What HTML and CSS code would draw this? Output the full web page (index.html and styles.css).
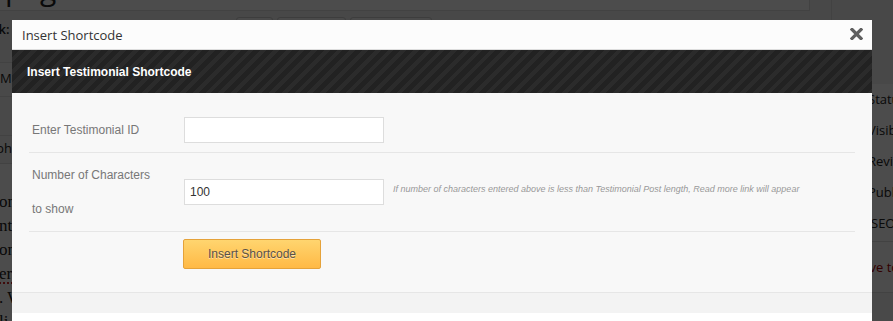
FILE: index.html
```html
<!DOCTYPE html>
<html lang="en">
<head>
    <meta charset="UTF-8">
    <meta name="viewport" content="width=device-width, initial-scale=1.0">
    <title>Insert Shortcode</title>
    <link rel="stylesheet" href="styles.css">
</head>
<body>
    <div class="wp-page">
        <div class="wp-main">
            <div class="title-box">page</div>
            <div class="permalink">
                <span class="permalink-label">Permalink:</span>
                <span class="permalink-url">http://example.com/testimonials/</span>
                <span class="small-btn btn-edit">Edit</span>
                <span class="small-btn btn-view">View Page</span>
                <span class="small-btn btn-short">Get Shortlink</span>
            </div>
            <div class="editor">
                <div class="editor-row row-media">Media</div>
                <div class="editor-row row-tools">B I</div>
                <div class="editor-row row-format">ph</div>
                <div class="editor-content">
                    <p>on the other side of the page</p>
                    <p>nt of our clients and partners</p>
                    <p>on every project we deliver</p>
                    <p class="misspelled">er customers say about us</p>
                    <p>. What they think</p>
                    <p>li</p>
                </div>
            </div>
        </div>
        <aside class="wp-side">
            <div class="side-box">
                <div class="side-item">Status: Published</div>
                <div class="side-item">Visibility: Public</div>
                <div class="side-item">Revisions: 3</div>
                <div class="side-item">Published on</div>
                <div class="side-item side-seo">SEO: Good</div>
                <div class="side-actions"><span class="trash">Move to Trash</span></div>
                <div class="side-footer"></div>
            </div>
        </aside>
    </div>

    <div class="overlay"></div>

    <div class="modal">
        <div class="modal-title">
            <span>Insert Shortcode</span>
            <svg class="modal-close" width="13" height="12" viewBox="0 0 13 12">
                <path d="M2 1.5 L11 10.5 M11 1.5 L2 10.5" stroke="#5f5f5f" stroke-width="3.2" stroke-linecap="square"/>
            </svg>
        </div>
        <div class="modal-header">Insert Testimonial Shortcode</div>
        <div class="modal-body">
            <div class="form-row">
                <label class="form-label" for="testimonial-id">Enter Testimonial ID</label>
                <div class="form-field">
                    <input type="text" id="testimonial-id">
                </div>
            </div>
            <div class="form-row">
                <label class="form-label" for="char-count">Number of Characters<br>to show</label>
                <div class="form-field">
                    <input type="text" id="char-count" value="100">
                    <span class="help">If number of characters entered above is less than Testimonial Post length, Read more link will appear</span>
                </div>
            </div>
            <div class="form-row form-actions">
                <div></div>
                <div class="form-field">
                    <button type="button" class="insert-btn">Insert Shortcode</button>
                </div>
            </div>
        </div>
        <div class="modal-footer"></div>
    </div>
</body>
</html>
```

FILE: styles.css
```css
body {
    margin: 0;
    padding: 0;
    background: #f1f1f1;
    color: #222;
    font-family: "Open Sans", Arial, sans-serif;
    font-size: 13px;
    overflow: hidden;
    height: 321px;
}

/* page behind the dialog */
.wp-page {
    display: flex;
    height: 321px;
    overflow: hidden;
}

.wp-main {
    width: 867px;
    margin-left: -58px;
    flex-shrink: 0;
}

.title-box {
    margin-top: -29px;
    height: 38px;
    width: 804px;
    border: 1px solid #ddd;
    background: #fff;
    font-size: 30px;
    line-height: 34px;
    padding-left: 62px;
}

.permalink {
    display: flex;
    align-items: center;
    height: 24px;
    margin-top: 6px;
}

.permalink-label {
    font-weight: 600;
    margin-right: 8px;
}

.permalink-url {
    width: 218px;
    color: #666;
    overflow: hidden;
    white-space: nowrap;
}

.small-btn {
    height: 22px;
    line-height: 22px;
    border: 1px solid #ccc;
    border-radius: 3px;
    background: #f7f7f7;
    font-size: 11px;
    padding: 0 4px;
    margin-right: 4px;
    overflow: hidden;
    white-space: nowrap;
}

.btn-edit { width: 27px; }
.btn-view { width: 59px; }
.btn-short { width: 72px; }

.editor {
    margin-top: 21px;
    border-top: 1px solid #ddd;
    background: #fff;
}

.editor-row {
    border-bottom: 1px solid #ddd;
    background: #f5f5f5;
    padding-left: 58px;
}

.row-media {
    height: 33px;
    line-height: 30px;
}

.row-tools {
    height: 38px;
    line-height: 38px;
    color: #f5f5f5;
}

.row-format {
    height: 27px;
    line-height: 24px;
    padding-left: 54px;
}

.editor-content {
    padding: 26px 0 0 57px;
    font-family: "Liberation Serif", "DejaVu Serif", serif;
    font-size: 17px;
    line-height: 24px;
}

.editor-content p {
    margin: 0;
    white-space: nowrap;
}

.misspelled {
    text-decoration: underline dotted #c00;
    text-underline-offset: 4px;
}

.wp-side {
    flex: 1;
    border-left: 1px solid #ddd;
    margin-left: 22px;
}

.side-box {
    margin-top: 84px;
    background: #fff;
}

.side-item {
    height: 31px;
    line-height: 31px;
    padding-left: 36px;
    white-space: nowrap;
}

.side-seo {
    padding-left: 39px;
    height: 33px;
    border-bottom: 1px solid #ddd;
}

.side-actions {
    height: 50px;
    line-height: 50px;
    padding-left: 18px;
    white-space: nowrap;
}

.trash {
    color: #a00;
}

.side-footer {
    height: 40px;
    background: #f5f5f5;
    border-top: 1px solid #ddd;
}

.overlay {
    position: fixed;
    inset: 0;
    background: rgba(0, 0, 0, 0.7);
}

/* dialog */
.modal {
    position: absolute;
    left: 12px;
    top: 20px;
    width: 860px;
    height: 301px;
    background: #fff;
}

.modal-title {
    display: flex;
    align-items: center;
    justify-content: space-between;
    height: 29px;
    padding: 0 9px 0 10px;
    background: #fcfcfc;
    border-bottom: 1px solid #ddd;
    color: #333;
    font-family: "Open Sans", Arial, sans-serif;
    font-size: 13px;
}

.modal-close {
    display: block;
    margin-top: -1px;
}

.modal-header {
    height: 43px;
    line-height: 44px;
    padding-left: 15px;
    background: repeating-linear-gradient(135deg, #222 0, #222 5px, #2b2b2b 5px, #2b2b2b 9px);
    color: #fff;
    font-family: "Liberation Sans", Arial, sans-serif;
    font-size: 12px;
    font-weight: bold;
}

.modal-body {
    background: #f8f8f8;
    padding: 15px 17px 0;
    height: 184px;
    font-family: "Liberation Sans", Arial, sans-serif;
    font-size: 12px;
}

.form-row {
    display: grid;
    grid-template-columns: 152px 1fr;
    align-items: center;
    padding: 5px 3px;
    border-bottom: 1px solid #e6e6e6;
}

.form-label {
    color: #777;
    line-height: 34px;
}

.form-field {
    display: flex;
    align-items: center;
}

.form-field input {
    width: 200px;
    height: 26px;
    box-sizing: border-box;
    border: 1px solid #ddd;
    background: #fff;
    padding: 0 5px;
    font-family: "Liberation Sans", Arial, sans-serif;
    font-size: 12px;
    color: #333;
    margin: 0;
}

.help {
    margin-left: 9px;
    margin-top: -6px;
    color: #999;
    font-size: 9px;
    font-style: italic;
    white-space: nowrap;
}

.form-actions {
    border-bottom: none;
    padding-top: 7px;
}

.insert-btn {
    width: 138px;
    height: 30px;
    margin-left: -1px;
    border: 1px solid #e5a23a;
    border-radius: 2px;
    background: linear-gradient(#ffd56f, #ffb945);
    color: #5a5148;
    font-family: "Liberation Sans", Arial, sans-serif;
    font-size: 12px;
    text-shadow: 0 1px 0 rgba(255, 255, 255, 0.5);
    cursor: pointer;
}

.modal-footer {
    height: 20px;
    background: #f3f3f3;
    border-top: 1px solid #e6e6e6;
}
```
